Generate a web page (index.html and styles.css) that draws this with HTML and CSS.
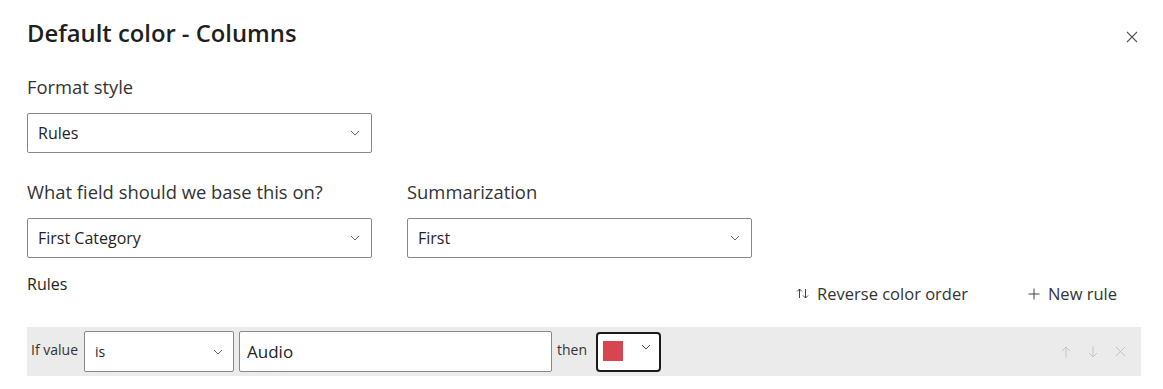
FILE: index.html
```html
<!DOCTYPE html>
<html lang="en">
<head>
  <meta charset="UTF-8">
  <title>Default color - Columns</title>
  <link rel="stylesheet" href="styles.css">
</head>
<body>
  <div class="dialog">
    <div class="header">
      <h1 class="title">Default color - Columns</h1>
      <button class="close" aria-label="Close">
        <svg width="12" height="12" viewBox="0 0 12 12"><path d="M1 1L11 11M11 1L1 11" stroke="#555" stroke-width="1.1"/></svg>
      </button>
    </div>

    <div class="field first">
      <label class="label">Format style</label>
      <div class="select wide">
        <span>Rules</span>
        <svg class="chev" width="10" height="6" viewBox="0 0 10 6"><path d="M1 1L5 5L9 1" fill="none" stroke="#666" stroke-width="1"/></svg>
      </div>
    </div>

    <div class="pair">
      <div class="field">
        <label class="label">What field should we base this on?</label>
        <div class="select wide">
          <span>First Category</span>
          <svg class="chev" width="10" height="6" viewBox="0 0 10 6"><path d="M1 1L5 5L9 1" fill="none" stroke="#666" stroke-width="1"/></svg>
        </div>
      </div>
      <div class="field">
        <label class="label">Summarization</label>
        <div class="select wide">
          <span>First</span>
          <svg class="chev" width="10" height="6" viewBox="0 0 10 6"><path d="M1 1L5 5L9 1" fill="none" stroke="#666" stroke-width="1"/></svg>
        </div>
      </div>
    </div>

    <div class="rules-bar">
      <span class="rules-label">Rules</span>
      <div class="actions">
        <button class="action">
          <svg width="13" height="13" viewBox="0 0 13 13"><path d="M3.5 11V2M1 4.5L3.5 2L6 4.5M9.5 2V11M7 8.5L9.5 11L12 8.5" fill="none" stroke="#444" stroke-width="1"/></svg>
          Reverse color order
        </button>
        <button class="action">
          <svg width="12" height="12" viewBox="0 0 12 12"><path d="M6 0.5V11.5M0.5 6H11.5" stroke="#444" stroke-width="1"/></svg>
          New rule
        </button>
      </div>
    </div>

    <div class="rule-row">
      <span class="small">If value</span>
      <div class="select op">
        <span>is</span>
        <svg class="chev" width="10" height="6" viewBox="0 0 10 6"><path d="M1 1L5 5L9 1" fill="none" stroke="#666" stroke-width="1"/></svg>
      </div>
      <div class="input">Audio</div>
      <span class="small">then</span>
      <div class="color-pick">
        <span class="swatch"></span>
        <svg class="chev" width="10" height="6" viewBox="0 0 10 6"><path d="M1 1L5 5L9 1" fill="none" stroke="#555" stroke-width="1"/></svg>
      </div>
      <div class="row-tools">
        <svg width="10" height="12" viewBox="0 0 10 12"><path d="M5 11.5V1M1 5L5 1L9 5" fill="none" stroke="#c4c4c4" stroke-width="1"/></svg>
        <svg width="10" height="12" viewBox="0 0 10 12"><path d="M5 0.5V11M1 7L5 11L9 7" fill="none" stroke="#c4c4c4" stroke-width="1"/></svg>
        <svg width="11" height="11" viewBox="0 0 11 11"><path d="M1 1L10 10M10 1L1 10" fill="none" stroke="#c4c4c4" stroke-width="1"/></svg>
      </div>
    </div>
  </div>
</body>
</html>
```

FILE: styles.css
```css
body {
  margin: 0;
  background: #fff;
  color: #252423;
  font-family: "Open Sans", "Noto Sans", sans-serif;
}

.dialog {
  width: 1114px;
  padding: 15px 22px 0 27px;
}

.header {
  display: flex;
  justify-content: space-between;
  align-items: center;
}

.title {
  margin: 0;
  font-size: 23.8px;
  font-weight: 600;
  line-height: 36px;
  color: #201f1e;
}

.close {
  border: none;
  background: none;
  padding: 0;
  margin-top: 8px;
  margin-right: 3px;
  display: flex;
}

.field {
  display: flex;
  flex-direction: column;
}

.label {
  font-size: 18.4px;
  line-height: 24px;
  color: #333;
  margin: 27px 0 14px;
}

.field.first .label {
  margin-top: 24px;
}

.select {
  box-sizing: border-box;
  display: flex;
  align-items: center;
  justify-content: space-between;
  border: 1px solid #8a8886;
  border-radius: 2px;
  background: #fff;
  font-size: 16px;
  color: #252423;
}

.select.wide {
  width: 345px;
  height: 40px;
  padding: 0 11px 0 10px;
}

.pair {
  display: flex;
  gap: 35px;
}

.rules-bar {
  display: flex;
  justify-content: space-between;
  align-items: flex-start;
  margin-top: 14px;
}

.rules-label {
  font-size: 16px;
  line-height: 24px;
}

.actions {
  display: flex;
  gap: 60px;
  margin-top: 10px;
  margin-right: 24px;
}

.action {
  display: flex;
  align-items: center;
  gap: 8px;
  border: none;
  background: none;
  padding: 0;
  font-family: inherit;
  font-size: 16.5px;
  color: #333;
}

.rule-row {
  display: flex;
  align-items: center;
  height: 49px;
  margin-top: 22px;
  padding: 0 0 0 4px;
  background: #ebebeb;
  width: 1110px;
}

.small {
  font-size: 14px;
  color: #333;
  margin-top: -4px;
}

.select.op {
  width: 150px;
  height: 41px;
  margin-left: 6px;
  padding: 0 10px 0 10px;
  font-size: 14px;
}

.input {
  box-sizing: border-box;
  width: 313px;
  height: 41px;
  margin-left: 5px;
  padding: 0 7px;
  display: flex;
  align-items: center;
  border: 1px solid #8a8886;
  border-radius: 2px;
  background: #fff;
  font-size: 17px;
}

.input + .small {
  margin-left: 5px;
}

.color-pick {
  box-sizing: border-box;
  width: 65px;
  height: 40px;
  margin-left: 9px;
  padding: 0 8px 0 5px;
  display: flex;
  align-items: flex-start;
  justify-content: space-between;
  border: 2px solid #1b1b1b;
  border-radius: 4px;
  background: #fff;
}

.swatch {
  width: 20px;
  height: 20px;
  margin-top: 7px;
  background: #d64550;
}

.color-pick .chev {
  margin-top: 10px;
}

.row-tools {
  margin-left: auto;
  margin-right: 15px;
  display: flex;
  align-items: center;
  gap: 17px;
}
```
